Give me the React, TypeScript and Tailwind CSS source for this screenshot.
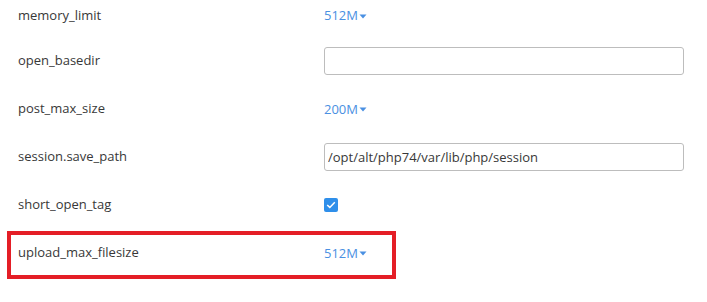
import React from 'react'

type Row =
  | { name: string; kind: 'select'; value: string }
  | { name: string; kind: 'text'; value: string }
  | { name: string; kind: 'check'; value: boolean }

const rows: Row[] = [
  { name: 'memory_limit', kind: 'select', value: '512M' },
  { name: 'open_basedir', kind: 'text', value: '' },
  { name: 'post_max_size', kind: 'select', value: '200M' },
  { name: 'session.save_path', kind: 'text', value: '/opt/alt/php74/var/lib/php/session' },
  { name: 'short_open_tag', kind: 'check', value: true },
  { name: 'upload_max_filesize', kind: 'select', value: '512M' },
]

const SelectValue = ({ value }: { value: string }) => (
  <button className="flex items-center text-[13px] text-[#4a90e2] leading-none">
    {value}
    <svg width="8" height="5" viewBox="0 0 8 5" className="ml-[1px] mt-[1px]">
      <path d="M0.5 0.5h7L4 4.5z" fill="#4a90e2" />
    </svg>
  </button>
)

const Checkbox = () => (
  <span className="flex h-[14px] w-[14px] items-center justify-center rounded-[2px] bg-[#2f8fea]">
    <svg width="10" height="8" viewBox="0 0 10 8">
      <path d="M1.2 4l2.6 2.4L8.8 1.2" fill="none" stroke="#fff" strokeWidth="1.5" />
    </svg>
  </span>
)

export default function App() {
  return (
    <div
      className="relative h-[302px] w-[707px] overflow-hidden bg-white text-[#383838]"
      style={{ fontFamily: '"Open Sans", sans-serif' }}
    >
      <div className="flex flex-col">
        {rows.map((row, i) => (
          <div
            key={row.name}
            className={`relative flex items-center ${
              i === 0 ? 'h-[31px]' : i === 1 ? 'mt-[16px] h-[28px]' : 'mt-[20px] h-[28px]'
            }`}
          >
            {/* highlight annotation */}
            {row.name === 'upload_max_filesize' && (
              <span className="pointer-events-none absolute left-[7px] top-[-8px] h-[48px] w-[389px] border-[4px] border-[#e41e26]" />
            )}
            <div className="w-[324px] shrink-0 pl-[18px] text-[13px]">{row.name}</div>
            <div className="flex w-[360px] items-center">
              {row.kind === 'select' && <SelectValue value={row.value} />}
              {row.kind === 'text' && (
                <input
                  readOnly
                  value={row.value}
                  className="h-[28px] w-full rounded-[3px] border border-[#bdbdbd] px-[3px] text-[13px] text-[#383838] outline-none"
                />
              )}
              {row.kind === 'check' && <Checkbox />}
            </div>
          </div>
        ))}
      </div>
    </div>
  )
}
